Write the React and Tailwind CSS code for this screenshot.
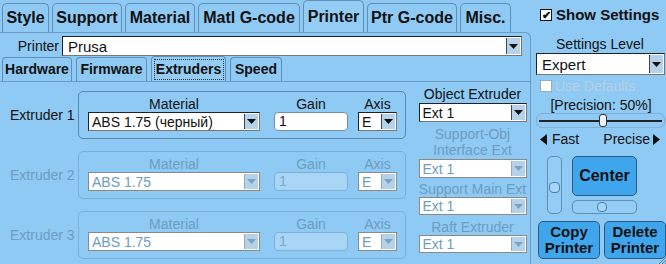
import React from 'react';

const Arrow = ({ dim }) => (
  <svg width="9" height="5" viewBox="0 0 9 5">
    <path d="M0 0h9L4.5 5z" fill={dim ? '#7fa3bf' : '#111'} />
  </svg>
);

const Select = ({ value, className = '', dim, big }) => (
  <div
    className={
      (dim
        ? 'flex bg-white border border-[#8a8a8a] text-[#6d9dc0] '
        : 'flex bg-white border border-[#222] border-b-[#777] border-r-[#777] text-[#111] ') + className
    }
  >
    <span className={big ? 'flex-1 flex items-center pl-[5px] text-[15px] leading-none' : 'flex-1 flex items-center pl-[3px] text-[14px] leading-none'}>
      {value}
    </span>
    <span
      className={
        dim
          ? 'w-[14px] my-[1px] mr-[1px] flex items-center justify-center bg-[#b4d3ea] border-l border-[#9ab]'
          : 'w-[14px] my-[1px] mr-[1px] flex items-center justify-center bg-[#b4d3ea] border-l border-[#445]'
      }
    >
      <Arrow dim={dim} />
    </span>
  </div>
);

const Tab = ({ label, w, active }) => (
  <div
    style={{ width: w }}
    className={
      active
        ? 'h-[32px] flex items-center justify-center rounded-t-[5px] border border-b-0 border-[#5f8fb6] bg-[#93cdf5] text-[16px] font-bold'
        : 'h-[29px] flex items-center justify-center rounded-t-[5px] border border-b-0 border-[#5f8fb6] bg-[#8ecaf4] text-[16px] font-bold'
    }
  >
    {label}
  </div>
);

const SubTab = ({ label, w, active }) => (
  <div
    style={{ width: w }}
    className={
      active
        ? 'h-[25px] flex items-center justify-center rounded-t-[4px] border border-b-0 border-[#5f8fb6] bg-[#93cdf5] text-[14px] font-bold'
        : 'h-[24px] flex items-center justify-center rounded-t-[4px] border border-b-0 border-[#5f8fb6] bg-[#8ecaf4] text-[14px] font-bold'
    }
  >
    {active ? (
      <span className="border border-dotted border-[#333] px-[2px] h-[21px] flex items-center w-[70px] justify-center">{label}</span>
    ) : (
      label
    )}
  </div>
);

const ExtruderRow = ({ n, material, dim }) => (
  <div className="flex items-center h-[48px]">
    <div className={dim ? 'w-[68px] text-[14px] text-[#6d9dc0]' : 'w-[68px] text-[14px] text-[#111]'}>Extruder {n}</div>
    <div
      className={
        dim
          ? 'w-[328px] h-[48px] rounded-[5px] border border-[#7db0d6] flex items-start pl-[9px] pt-[4px] gap-[14px] text-[#6d9dc0]'
          : 'w-[328px] h-[48px] rounded-[5px] border border-[#5a87ad] flex items-start pl-[9px] pt-[4px] gap-[14px] text-[#111]'
      }
    >
      <div className="w-[172px] flex flex-col items-center">
        <div className="text-[14px] leading-[16px]">Material</div>
        <Select value={material} dim={dim} className="w-[172px] h-[19px]" />
      </div>
      <div className="w-[74px] flex flex-col items-center">
        <div className="text-[14px] leading-[16px]">Gain</div>
        <div
          className={
            dim
              ? 'w-[74px] h-[19px] rounded-[4px] border border-[#7db0d6] bg-[#a9d6f6] text-[14px] leading-[17px] pl-[4px] text-[#7aaacc]'
              : 'w-[74px] h-[19px] rounded-[4px] border border-[#6f8fa8] bg-white text-[14px] leading-[17px] pl-[4px]'
          }
        >
          1
        </div>
      </div>
      <div className="w-[39px] ml-[-4px] flex flex-col items-center">
        <div className="text-[14px] leading-[16px]">Axis</div>
        <Select value="E" dim={dim} className="w-[39px] h-[19px]" />
      </div>
    </div>
  </div>
);

const Slot = ({ className, thumb }) => (
  <div className={'relative rounded-[5px] border border-[#5f8fb6] bg-[#93cdf5] ' + className}>
    <div className={'absolute rounded-[4px] border border-[#4f7fa6] bg-[#a5d6f8] ' + thumb} />
  </div>
);

export default function App() {
  return (
    <div
      className="w-[666px] h-[264px] bg-[#8ecaf4] overflow-hidden flex text-[#111] relative"
      style={{ fontFamily: '"Liberation Sans", Arial, sans-serif' }}
    >
      {/* left panel */}
      <div className="w-[532px] flex flex-col">
        <div className="h-[32px] flex items-end pl-[2px] gap-[3px]">
          <Tab label="Style" w={47} />
          <Tab label="Support" w={70} />
          <Tab label="Material" w={70} />
          <Tab label="Matl G-code" w={102} />
          <Tab label="Printer" w={61} active />
          <Tab label="Ptr G-code" w={90} />
          <Tab label="Misc." w={51} />
        </div>
        <div className="flex-1 border-t border-r border-[#6a9cc4] rounded-tr-[6px] flex flex-col">
          <div className="flex items-center h-[20px] mt-[3px]">
            <span className="w-[62px] pr-[3px] text-right text-[14px]">Printer</span>
            <Select value="Prusa" big className="w-[460px] h-[20px]" />
          </div>
          <div className="h-[26px] flex items-end pl-[2px] gap-[4px] border-b border-[#6a9cc4]">
            <SubTab label="Hardware" w={70} />
            <SubTab label="Firmware" w={71} />
            <SubTab label="Extruders" w={75} active />
            <SubTab label="Speed" w={52} />
          </div>
          <div className="flex">
            <div className="pl-[10px] pt-[9px] flex flex-col gap-[12px]">
              <ExtruderRow n={1} material="ABS 1.75 (черный)" />
              <ExtruderRow n={2} material="ABS 1.75" dim />
              <ExtruderRow n={3} material="ABS 1.75" dim />
            </div>
            <div className="ml-[12px] w-[109px] flex flex-col items-center pt-[4px] text-[14px] leading-[16px]">
              <div>Object Extruder</div>
              <Select value="Ext 1" className="w-[108px] h-[19px] mt-[1px]" />
              <div className="text-[#6d9dc0] text-center mt-[4px]">Support-Obj<br />Interface Ext</div>
              <Select value="Ext 1" dim className="w-[108px] h-[19px] mt-[1px]" />
              <div className="text-[#6d9dc0] mt-[3px] whitespace-nowrap">Support Main Ext</div>
              <Select value="Ext 1" dim className="w-[108px] h-[18px] mt-[0px]" />
              <div className="text-[#6d9dc0] mt-[4px]">Raft Extruder</div>
              <Select value="Ext 1" dim className="w-[108px] h-[18px] mt-[0px]" />
            </div>
          </div>
        </div>
      </div>

      {/* right panel */}
      <div className="flex-1 flex flex-col pl-[5px]">
        <div className="flex items-center mt-[7px] ml-[4px] h-[16px]">
          <div className="w-[12px] h-[12px] bg-white border border-[#111] flex items-center justify-center text-[11px] leading-none font-bold">✔</div>
          <span className="ml-[4px] text-[15px] font-bold">Show Settings</span>
        </div>
        <div className="text-center text-[14px] leading-[16px] mt-[13px] pr-[2px]">Settings Level</div>
        <Select value="Expert" big className="w-[129px] h-[22px] mt-[1px]" />
        <div className="flex items-center mt-[4px] ml-[4px] h-[14px]">
          <div className="w-[12px] h-[12px] bg-white border border-[#9ab]" />
          <span className="ml-[3px] text-[14px] text-[#b9d0e2]">Use Defaults</span>
        </div>
        <div className="text-center text-[14px] leading-[16px] mt-[4px]">[Precision: 50%]</div>
        <div className="relative h-[15px] w-[129px] rounded-[6px] border border-[#7fb0d6] flex items-center">
          <div className="w-full h-[2px] bg-[#222] mx-[2px]" />
          <div className="absolute left-[62px] top-[0px] w-[8px] h-[13px] rounded-[3px] border border-[#333] bg-[#e8f3fb]" />
        </div>
        <div className="flex justify-between items-center text-[14px] leading-[16px] mt-[3px] pl-[4px] pr-[6px]">
          <span className="flex items-center gap-[5px]">
            <svg width="7" height="11" viewBox="0 0 7 11"><path d="M7 0v11L0 5.5z" fill="#111" /></svg>Fast
          </span>
          <span className="flex items-center gap-[3px]">
            Precise<svg width="7" height="11" viewBox="0 0 7 11"><path d="M0 0v11L7 5.5z" fill="#111" /></svg>
          </span>
        </div>
        <div className="flex mt-[9px] ml-[11px] gap-[10px]">
          <Slot className="w-[15px] h-[58px]" thumb="left-[1px] top-[25px] w-[11px] h-[11px]" />
          <div className="flex flex-col gap-[4px]">
            <div className="w-[65px] h-[40px] rounded-[5px] border border-[#2d5a80] bg-[#3fa6ee] flex items-center justify-center text-[16px] font-bold">
              Center
            </div>
            <Slot className="w-[65px] h-[14px]" thumb="left-[24px] top-[1px] w-[10px] h-[10px]" />
          </div>
        </div>
        <div className="flex gap-[4px] mt-[7px] ml-[2px]">
          <div className="w-[62px] h-[38px] rounded-[5px] border border-[#2d5a80] bg-[#3fa6ee] flex flex-col items-center justify-center text-[15px] leading-[16px] font-bold">
            <span>Copy</span>
            <span>Printer</span>
          </div>
          <div className="w-[62px] h-[38px] rounded-[5px] border border-[#2d5a80] bg-[#3fa6ee] flex flex-col items-center justify-center text-[15px] leading-[16px] font-bold">
            <span>Delete</span>
            <span>Printer</span>
          </div>
        </div>
      </div>
      <svg className="absolute right-0 bottom-0" width="8" height="8" viewBox="0 0 8 8">
        <path d="M8 1L1 8M8 4L4 8M8 7L7 8" stroke="#5a7f9e" strokeWidth="1" />
      </svg>
    </div>
  );
}
